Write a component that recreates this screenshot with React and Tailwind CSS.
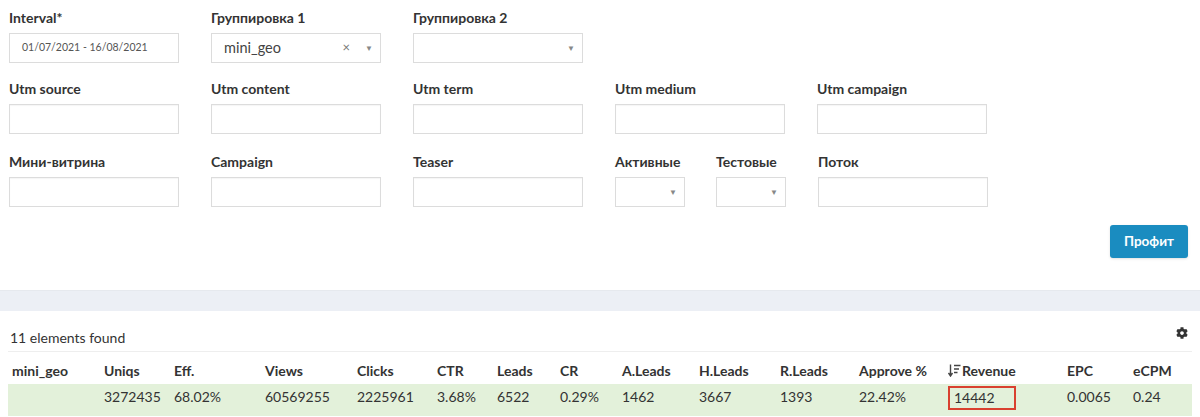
import { FaCog } from 'react-icons/fa'

const font = { fontFamily: 'Lato, "Noto Sans", sans-serif' }

function Field({ label, children, className = 'w-[170px]' }) {
  return (
    <div className={className}>
      <div className="h-[18px] whitespace-nowrap text-[14px] font-bold leading-[18px] text-[#333]">{label}</div>
      <div className="mt-[6px]">{children}</div>
    </div>
  )
}

function TextInput() {
  return <div className="h-[30px] w-full border border-[#dcdcdc] bg-white shadow-[inset_0_1px_1px_rgba(0,0,0,0.04)]" />
}

function Caret() {
  return <span className="text-[8px] text-[#888]">▼</span>
}

function Select({ value, clearable }) {
  return (
    <div className="flex h-[30px] w-full items-center border border-[#dcdcdc] bg-white pl-3 pr-[7px]">
      <span className="flex-1 text-[14.5px] text-[#444]">{value}</span>
      {clearable && <span className="mr-[15px] text-[13px] text-[#777]">×</span>}
      <Caret />
    </div>
  )
}

const cols = ['mini_geo', 'Uniqs', 'Eff.', 'Views', 'Clicks', 'CTR', 'Leads', 'CR', 'A.Leads', 'H.Leads', 'R.Leads', 'Approve %', 'Revenue', 'EPC', 'eCPM']
const row = ['', '3272435', '68.02%', '60569255', '2225961', '3.68%', '6522', '0.29%', '1462', '3667', '1393', '22.42%', '14442', '0.0065', '0.24']
const grid = 'grid grid-cols-[92px_70px_91px_92px_80px_60px_63px_62px_77px_81px_79px_89px_119px_66px_1fr]'

function SortIcon() {
  return (
    <svg width="13" height="13" viewBox="0 0 13 13" className="mr-[1px] inline-block align-[-1px]">
      <path d="M2.5 0.5v11M0.5 9l2 3 2-3" stroke="#444" strokeWidth="1.4" fill="none" />
      <path d="M6 1.5h6.5M6 5h5M6 8.5h3.5" stroke="#444" strokeWidth="1.4" />
    </svg>
  )
}

export default function App() {
  return (
    <div className="h-[417px] w-[1200px] overflow-hidden bg-white" style={font}>
      <div className="px-[9px] pt-[9px]">
        <div className="flex gap-[32px]">
          <Field label="Interval*">
            <div className="flex h-[30px] items-center border border-[#dcdcdc] bg-white pl-3 text-[10.5px] text-[#555]">
              01/07/2021 - 16/08/2021
            </div>
          </Field>
          <Field label="Группировка 1">
            <Select value="mini_geo" clearable />
          </Field>
          <Field label="Группировка 2">
            <Select value="" />
          </Field>
        </div>
        <div className="mt-[17px] flex gap-[32px]">
          <Field label="Utm source"><TextInput /></Field>
          <Field label="Utm content"><TextInput /></Field>
          <Field label="Utm term"><TextInput /></Field>
          <Field label="Utm medium"><TextInput /></Field>
          <Field label="Utm campaign"><TextInput /></Field>
        </div>
        <div className="mt-[19px] flex gap-[32px]">
          <Field label="Мини-витрина"><TextInput /></Field>
          <Field label="Campaign"><TextInput /></Field>
          <Field label="Teaser"><TextInput /></Field>
          <div className="flex gap-[31px]">
            <Field label="Активные" className="w-[70px]"><Select value="" /></Field>
            <Field label="Тестовые" className="w-[70px]"><Select value="" /></Field>
          </div>
          <Field label="Поток"><TextInput /></Field>
        </div>
        <div className="mt-[18px] flex justify-end pr-[3px]">
          <button className="h-[33px] w-[78px] rounded-[3px] bg-[#1a8cc0] text-[13.5px] font-bold text-white shadow-sm">
            Профит
          </button>
        </div>
      </div>

      <div className="mt-[32px] h-[21px] border-t border-[#e6e9ee] bg-[#eceff5]" />

      <div className="px-[8px]">
        <div className="flex h-[41px] items-end justify-between border-b border-[#eeeeee] pb-[4px] pl-[2px] pr-[4px]">
          <span className="text-[14px] leading-[18px] text-[#333]">11 elements found</span>
          <FaCog size={12} className="mb-[8px] text-[#333]" />
        </div>
        <div className={`${grid} h-[32px] items-start pt-[10px] text-[14px] font-bold leading-[18px] text-[#333]`}>
          {cols.map((c) => (
            <div key={c} className="whitespace-nowrap pl-[4px]">
              {c === 'Revenue' ? <><SortIcon />{c}</> : c}
            </div>
          ))}
        </div>
        <div className={`${grid} h-[32px] items-start bg-[#e3f1da] pt-[4px] text-[14px] leading-[18px] text-[#333]`}>
          {row.map((v, i) => (
            <div key={i} className="pl-[4px]">
              {i === 12 ? (
                <span className="-mt-[2px] block h-[24px] w-[68px] border-2 border-[#d9412f] pl-[4px] leading-[20px]">{v}</span>
              ) : (
                v
              )}
            </div>
          ))}
        </div>
      </div>
    </div>
  )
}
